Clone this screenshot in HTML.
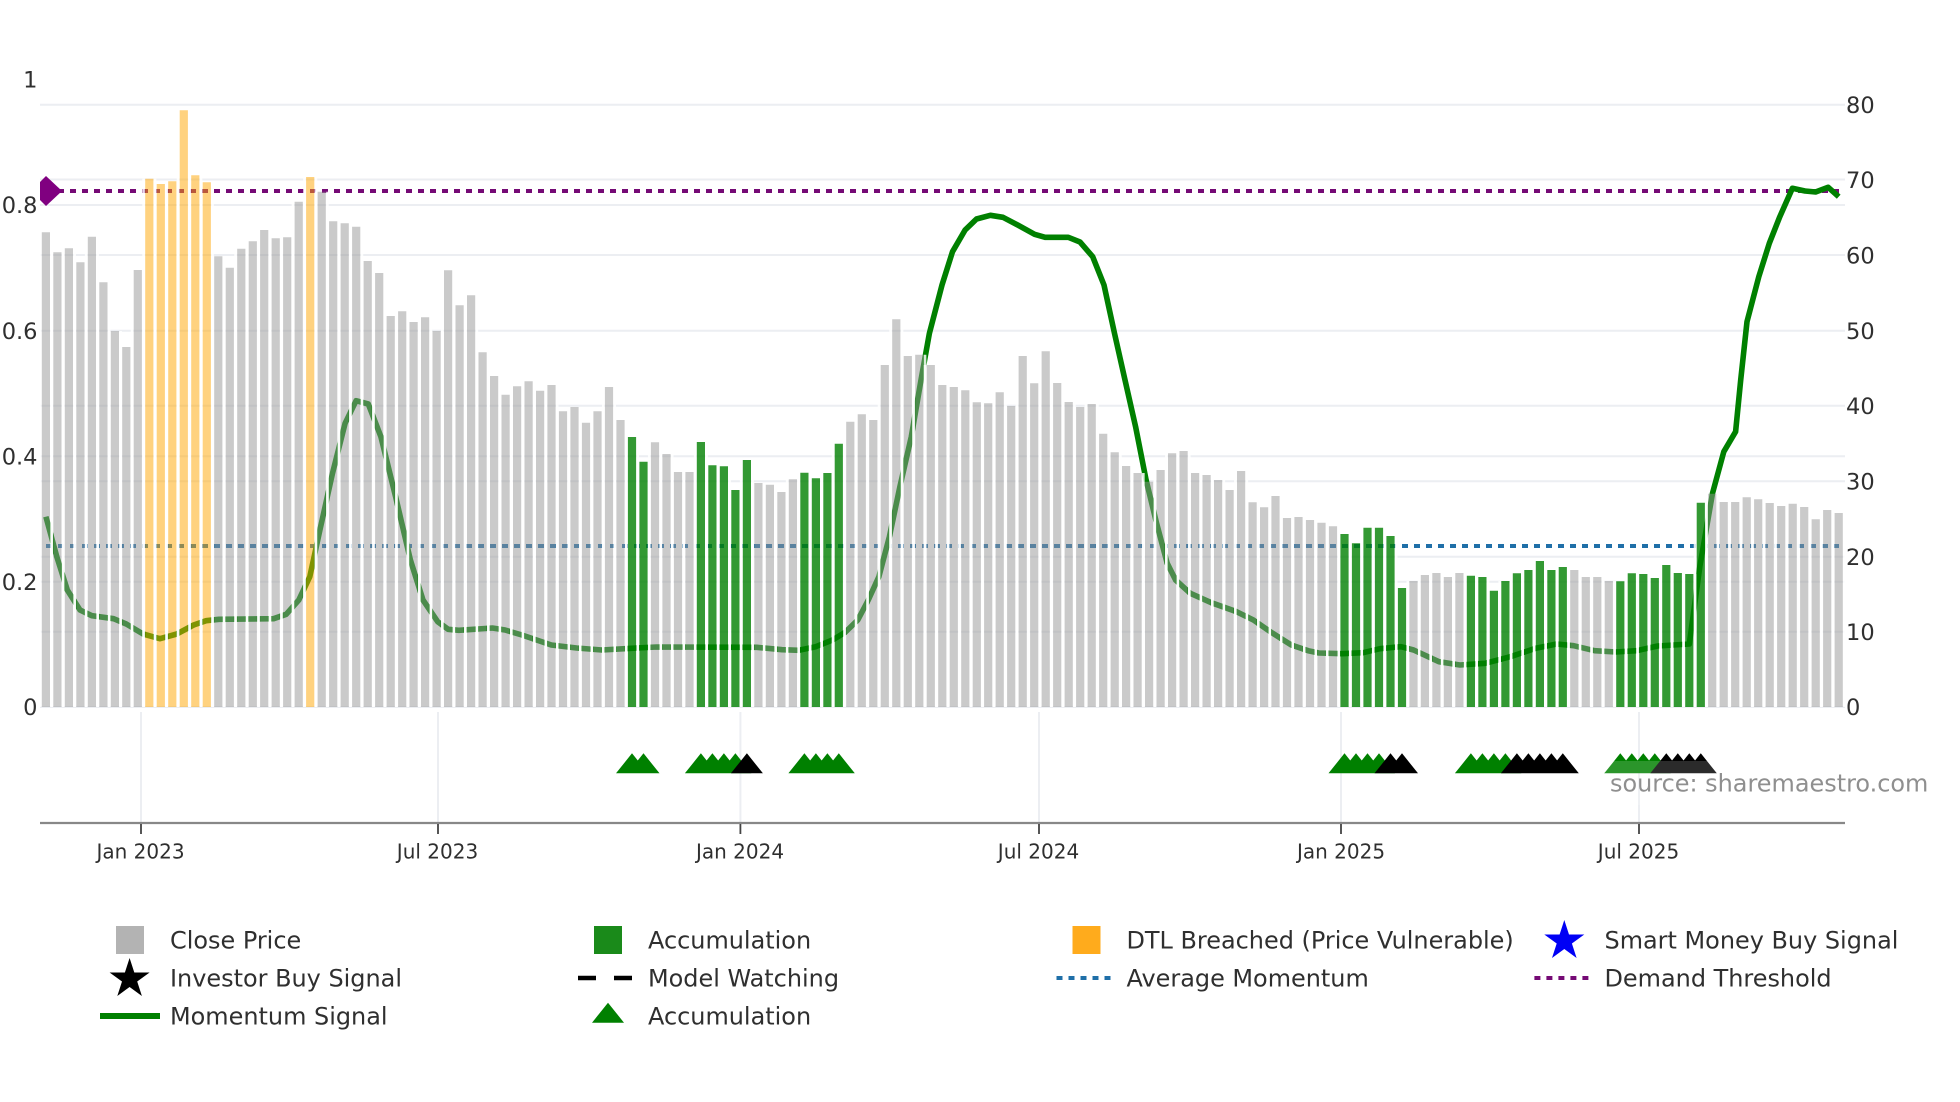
<!DOCTYPE html>
<html lang="en">
<head>
<meta charset="utf-8">
<title>Chart</title>
<style>
html,body{margin:0;padding:0;background:#fff;width:1960px;height:1102px;overflow:hidden}
svg{display:block}
text{font-family:"DejaVu Sans","Liberation Sans",sans-serif;fill:#2f2f2f}
.y{font-size:22.5px}
.x{font-size:20px;text-anchor:middle}
.l{font-size:23.95px}
</style>
</head>
<body>
<svg width="1960" height="1102" viewBox="0 0 1960 1102" xmlns="http://www.w3.org/2000/svg">
<defs>
<path id="gb" fill="none" d="M45.9 232.3V707M57.4 252.3V707M68.9 248.3V707M80.4 262.3V707M91.9 236.7V707M103.4 282.3V707M114.9 331V707M126.3 347V707M137.8 270V707M218.3 256.3V707M229.8 267.7V707M241.3 248.7V707M252.8 241.3V707M264.2 230V707M275.7 238.3V707M287.2 237.3V707M298.7 201.7V707M321.7 191.7V707M333.2 221.3V707M344.7 223.3V707M356.2 226.7V707M367.7 261V707M379.2 273V707M390.7 316V707M402.2 311.3V707M413.6 322V707M425.1 317.3V707M436.6 331V707M448.1 270.3V707M459.6 305.3V707M471.1 295.3V707M482.6 352.3V707M494.1 376V707M505.6 394.7V707M517.1 386.3V707M528.6 381.3V707M540.1 390.7V707M551.5 385V707M563 411.3V707M574.5 407V707M586 422.7V707M597.5 411.3V707M609 387V707M620.5 420V707M655 442.3V707M666.5 454V707M678 472V707M689.5 472V707M758.4 483V707M769.9 484.7V707M781.4 492V707M792.9 479.3V707M850.3 421.7V707M861.8 414.3V707M873.3 420V707M884.8 365V707M896.3 319.3V707M907.8 356V707M919.3 354.7V707M930.8 365V707M942.3 385V707M953.8 387V707M965.3 390.3V707M976.8 402.3V707M988.2 403.3V707M999.7 392.3V707M1011.2 406V707M1022.7 356V707M1034.2 383.3V707M1045.7 351.3V707M1057.2 383V707M1068.7 402V707M1080.2 407V707M1091.7 404V707M1103.2 433.7V707M1114.7 452.3V707M1126.1 466V707M1137.6 473V707M1149.1 481.7V707M1160.6 470V707M1172.1 453.3V707M1183.6 451V707M1195.1 473V707M1206.6 475V707M1218.1 480V707M1229.6 490V707M1241.1 471V707M1252.6 502.3V707M1264.1 507.3V707M1275.5 496V707M1287 518V707M1298.5 517V707M1310 520V707M1321.5 522.7V707M1333 526.3V707M1413.5 581V707M1424.9 575V707M1436.4 573V707M1447.9 577V707M1459.4 573V707M1574.3 570V707M1585.8 577V707M1597.3 577V707M1608.8 581V707M1712.2 493.7V707M1723.7 502V707M1735.2 502V707M1746.7 497.3V707M1758.2 499.3V707M1769.7 503V707M1781.2 506V707M1792.7 503.7V707M1804.2 507V707M1815.7 519.3V707M1827.2 510V707M1838.7 513V707"/>
<path id="ob" fill="none" d="M149.3 178.7V707M160.8 184V707M172.3 181.3V707M183.8 110.3V707M195.3 175.3V707M206.8 182.3V707M310.2 177V707"/>
<path id="nb" fill="none" d="M632 437V707M643.5 461.7V707M700.9 442V707M712.4 465.3V707M723.9 466.3V707M735.4 490V707M746.9 460V707M804.4 472.7V707M815.9 478.3V707M827.4 473V707M838.8 443.7V707M1344.5 534V707M1356 543.3V707M1367.5 527.7V707M1379 527.7V707M1390.5 536V707M1402 588V707M1470.9 575.7V707M1482.4 577V707M1493.9 590.7V707M1505.4 581V707M1516.9 573.3V707M1528.4 570V707M1539.9 561V707M1551.4 570V707M1562.8 567V707M1620.3 581.3V707M1631.8 573.3V707M1643.3 574V707M1654.8 578V707M1666.3 565V707M1677.8 573V707M1689.3 574V707M1700.8 502.7V707"/>
</defs>
<rect width="1960" height="1102" fill="#fff"/>
<!-- grid -->
<path d="M40 104.7H1845M40 179.5H1845M40 205H1845M40 255H1845M40 330.7H1845M40 405.7H1845M40 456.3H1845M40 481.3H1845M40 556.7H1845M40 581.7H1845M40 631.7H1845M40 707H1845" stroke="#eceef2" stroke-width="2" fill="none"/>
<path d="M141 712V823M438 712V823M740.4 712V823M1039 712V823M1341 712V823M1639 712V823" stroke="#eceef2" stroke-width="2" fill="none"/>
<!-- threshold lines -->
<path d="M46 546H1839" stroke="#1f6fa8" stroke-width="4" stroke-dasharray="6 6" fill="none"/>
<path d="M46 191H1839" stroke="#750a75" stroke-width="4" stroke-dasharray="6 6" fill="none"/>
<path d="M40 182L46 176L62 191L46 206L40 200Z" fill="#800080"/>
<!-- momentum -->
<polyline fill="none" stroke="#008000" stroke-width="5.6" stroke-linejoin="round" points="45.9,516.7 56.8,556.7 67.3,590 80,610 91.8,615.7 113.6,618.7 126.3,624 143.1,634 159.9,638.7 176.8,634 193.6,625 206.2,620.7 218.9,619.3 273.6,618.7 286.2,614.3 298.8,600 309.8,576.7 319.9,530 332.5,473.3 345.1,423.3 356.1,400.7 368.3,404 380.9,436.7 395.6,496.7 410.4,560 423,600 437.7,621.7 448.2,629.3 458.8,630.3 492.4,628 505.1,630 521.9,635 551.3,645 576.6,648 601.9,650 631.3,648.3 656.6,647 756.8,647.3 782.1,649.7 798.9,650.3 815.7,646.7 832.6,640 845.2,632.3 857.8,620 868.3,600 878.9,576.7 889.4,536.7 899.9,486.7 911.3,436.7 921,380 929.4,333.3 942,285 952.5,251.7 965.1,230 976.5,219 990.4,215.3 1003,217.3 1017.7,225 1034.6,234.3 1045.1,237.3 1068.3,237.3 1080,242 1092.7,256.7 1104,285 1114.5,333.3 1125,380 1135.6,426.7 1146.1,480 1156.6,523.3 1167.2,563.3 1175.6,580 1190.3,593.3 1211.3,602.7 1236.6,611.7 1253.4,620 1270.3,631.7 1291.3,645 1308.2,650.7 1318.9,653 1342.1,653.7 1363.1,652.7 1380,648.7 1401,646.7 1413.6,650 1438.9,661.7 1459.9,665 1485.2,663.3 1510.4,656.7 1535.7,648.3 1556.7,644 1573.6,645.7 1594.6,650.7 1615.7,652 1636.7,650.7 1657.7,646 1689.3,644 1699.8,566.7 1712.5,493.3 1723.8,451.7 1735.6,431.7 1740.7,380 1747,321.7 1758.8,276.7 1769.3,243.3 1779.8,216.7 1792.4,188.3 1805,191 1815.6,192 1828.2,187.3 1838.7,196.7"/>
<!-- bar outlines covering the gaps -->
<g stroke="#fff" stroke-opacity=".85" stroke-width="2.6">
<use href="#gb" transform="translate(-5.75 0)"/>
<use href="#gb" transform="translate(5.75 0)"/>
<use href="#ob" transform="translate(-5.75 0)"/>
<use href="#ob" transform="translate(5.75 0)"/>
<use href="#nb" transform="translate(-5.75 0)"/>
<use href="#nb" transform="translate(5.75 0)"/>
</g>
<!-- bars -->
<use href="#gb" stroke="rgb(150,150,150)" stroke-opacity=".5" stroke-width="8.2"/>
<use href="#ob" stroke="rgb(255,165,0)" stroke-opacity=".5" stroke-width="8.2"/>
<use href="#nb" stroke="rgb(0,128,0)" stroke-opacity=".8" stroke-width="8.2"/>
<!-- triangle markers -->
<path fill="#008000" d="M632 753.3L648 773.3H616ZM643.5 753.3L659.5 773.3H627.5ZM700.9 753.3L716.9 773.3H684.9ZM712.4 753.3L728.4 773.3H696.4ZM723.9 753.3L739.9 773.3H707.9ZM735.4 753.3L751.4 773.3H719.4ZM804.4 753.3L820.4 773.3H788.4ZM815.9 753.3L831.9 773.3H799.9ZM827.4 753.3L843.4 773.3H811.4ZM838.8 753.3L854.8 773.3H822.8ZM1344.5 753.3L1360.5 773.3H1328.5ZM1356 753.3L1372 773.3H1340ZM1367.5 753.3L1383.5 773.3H1351.5ZM1379 753.3L1395 773.3H1363ZM1470.9 753.3L1486.9 773.3H1454.9ZM1482.4 753.3L1498.4 773.3H1466.4ZM1493.9 753.3L1509.9 773.3H1477.9ZM1505.4 753.3L1521.4 773.3H1489.4ZM1620.3 753.3L1636.3 773.3H1604.3ZM1631.8 753.3L1647.8 773.3H1615.8ZM1643.3 753.3L1659.3 773.3H1627.3ZM1654.8 753.3L1670.8 773.3H1638.8Z"/>
<path fill="#000" d="M746.9 753.3L762.9 773.3H730.9ZM1390.5 753.3L1406.5 773.3H1374.5ZM1402 753.3L1418 773.3H1386ZM1516.9 753.3L1532.9 773.3H1500.9ZM1528.4 753.3L1544.4 773.3H1512.4ZM1539.9 753.3L1555.9 773.3H1523.9ZM1551.4 753.3L1567.4 773.3H1535.4ZM1562.8 753.3L1578.8 773.3H1546.8ZM1666.3 753.3L1682.3 773.3H1650.3ZM1677.8 753.3L1693.8 773.3H1661.8ZM1689.3 753.3L1705.3 773.3H1673.3ZM1700.8 753.3L1716.8 773.3H1684.8Z"/>
<!-- source annotation -->
<rect x="1605" y="761" width="325" height="44" fill="#fff" fill-opacity=".17"/>
<text x="1610" y="791.5" font-size="23.95" style="fill:#8f8f8f">source: sharemaestro.com</text>
<!-- x axis -->
<path d="M40 823H1845" stroke="#888" stroke-width="2.2" fill="none"/>
<path d="M141 824V834M438 824V834M740.4 824V834M1039 824V834M1341 824V834M1639 824V834" stroke="#444" stroke-width="1.8" fill="none"/>
<text class="x" x="140.5" y="858.5">Jan 2023</text>
<text class="x" x="437.5" y="858.5">Jul 2023</text>
<text class="x" x="740" y="858.5">Jan 2024</text>
<text class="x" x="1038.5" y="858.5">Jul 2024</text>
<text class="x" x="1341" y="858.5">Jan 2025</text>
<text class="x" x="1638.5" y="858.5">Jul 2025</text>
<!-- left axis -->
<g class="y" text-anchor="end">
<text x="37.5" y="87.6">1</text>
<text x="37.5" y="213.2">0.8</text>
<text x="37.5" y="339">0.6</text>
<text x="37.5" y="464.6">0.4</text>
<text x="37.5" y="590">0.2</text>
<text x="37.5" y="715">0</text>
</g>
<!-- right axis -->
<g class="y">
<text x="1846" y="113">80</text>
<text x="1846" y="188">70</text>
<text x="1846" y="263.3">60</text>
<text x="1846" y="339">50</text>
<text x="1846" y="414">40</text>
<text x="1846" y="489.5">30</text>
<text x="1846" y="565">20</text>
<text x="1846" y="640">10</text>
<text x="1846" y="715">0</text>
</g>
<!-- legend -->
<rect x="116" y="926" width="28" height="28" fill="#b3b3b3"/>
<rect x="594" y="926" width="28" height="28" fill="#1a8a1a"/>
<rect x="1072.5" y="926" width="28" height="28" fill="#ffab1c"/>
<path fill="#0000f5" d="M1564.3 920L1569 934.5L1584.3 934.5L1571.9 943.5L1576.6 958L1564.3 949L1552 958L1556.7 943.5L1544.3 934.5L1559.6 934.5Z"/>
<path fill="#000" d="M129.6 958L134.3 972.5L149.6 972.5L137.2 981.5L141.9 996L129.6 987L117.3 996L122 981.5L109.6 972.5L124.9 972.5Z"/>
<path d="M578 978H596M614 978H632" stroke="#000" stroke-width="4.5" fill="none"/>
<path d="M1056.5 978H1111" stroke="#1f6fa8" stroke-width="4" stroke-dasharray="6 6" fill="none"/>
<path d="M1534.4 978H1589.6" stroke="#750a75" stroke-width="4" stroke-dasharray="6 6" fill="none"/>
<path d="M100 1016H160" stroke="#008000" stroke-width="6" fill="none"/>
<path fill="#008000" d="M608 1002.7L624 1022.7H592Z"/>
<g class="l">
<text x="170" y="948.5">Close Price</text>
<text x="648" y="948.5">Accumulation</text>
<text x="1126.5" y="948.5">DTL Breached (Price Vulnerable)</text>
<text x="1604.5" y="948.5">Smart Money Buy Signal</text>
<text x="170" y="986.5">Investor Buy Signal</text>
<text x="648" y="986.5">Model Watching</text>
<text x="1126.5" y="986.5">Average Momentum</text>
<text x="1604.5" y="986.5">Demand Threshold</text>
<text x="170" y="1024.5">Momentum Signal</text>
<text x="648" y="1024.5">Accumulation</text>
</g>
</svg>
</body>
</html>
